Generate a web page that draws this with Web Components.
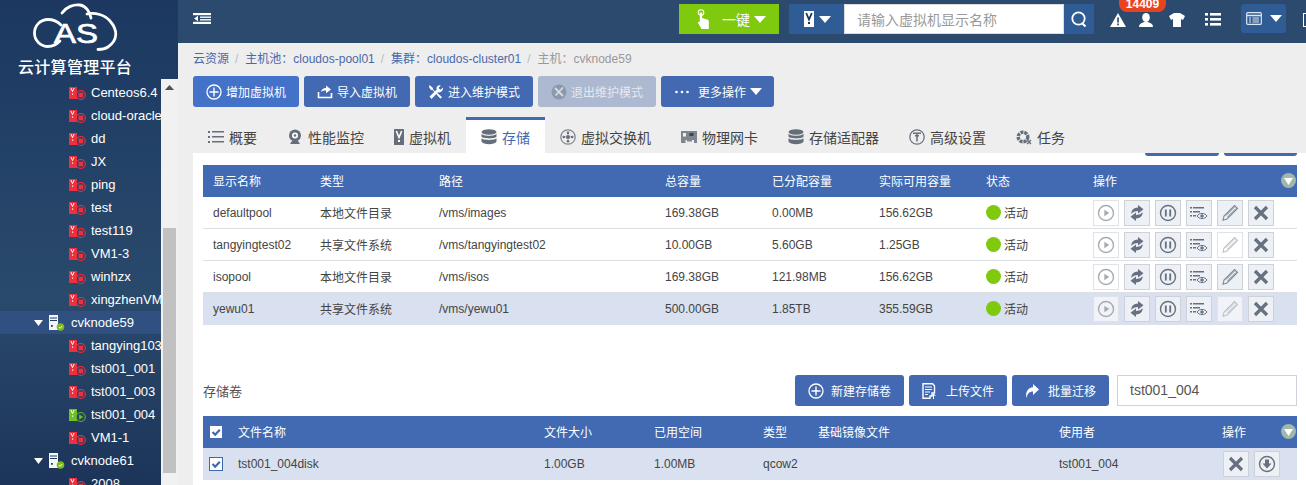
<!DOCTYPE html>
<html lang="zh"><head><meta charset="utf-8"><title>CAS</title>
<style>
html,body{margin:0;padding:0;height:485px;overflow:hidden;background:#fff;font-family:"Liberation Sans","Noto Sans CJK SC",sans-serif;font-size:12px}
</style></head><body>
<cas-app></cas-app>
<script>
const S=(w,h,b,vb)=>`<svg xmlns="http://www.w3.org/2000/svg" width="${w}" height="${h}" viewBox="${vb||`0 0 ${w} ${h}`}" style="display:block;flex:none">${b}</svg>`;
const ICONS={
 plus:S(16,16,'<circle cx="8" cy="8" r="7" fill="none" stroke="#fff" stroke-width="1.3"/><path d="M8 3.5v9M3.5 8h9" stroke="#fff" stroke-width="1.4"/>'),
 imp:S(16,16,'<path d="M1.5 8v5.5h13V9" fill="none" stroke="#fff" stroke-width="1.6"/><path d="M4 8c.5-2.6 2.6-4 5-4V1.6l5 3.9-5 3.700V6.600C7 6.500 5.500 7 4 8z" fill="#fff"/>'),
 tools:S(16,16,'<path d="M1.500 1l3.500 3v1.500L14 13l-1.500 1.800L4.500 6H3L1 3z" fill="#fff"/><path d="M15 3.500l-2.500 2.200-2-1.800 2.300-2.400c-2.200-.6-4.300.8-4.300 3 0 .5.100.8.200 1.200L1.500 12.500 3.500 15 10 8.300c2.600.9 5.400-1.900 5-4.800z" fill="#fff"/>'),
 toolsOff:S(16,16,'<circle cx="8" cy="8" r="7.500" fill="#8c99ad"/><path d="M4 4l8 8M12 3.500L4.500 11.500" stroke="#d6dbe5" stroke-width="1.800"/>'),
 dots:S(20,16,'<circle cx="2.500" cy="8" r="1.300" fill="#fff"/><circle cx="8" cy="8" r="1.300" fill="#fff"/><circle cx="13.500" cy="8" r="1.300" fill="#fff"/>'),
 tri:S(12,7,'<path d="M0 0h12L6 7z" fill="#fff"/>'),
 list:S(16,16,'<g fill="#656e7b"><rect x="0" y="2" width="2" height="2"/><rect x="0" y="7" width="2" height="2"/><rect x="0" y="12" width="2" height="2"/><rect x="4" y="2" width="12" height="1.500"/><rect x="4" y="7" width="12" height="1.500"/><rect x="4" y="12" width="12" height="1.500"/></g>'),
 cam:S(16,16,'<circle cx="8" cy="6.500" r="6" fill="#656e7b"/><circle cx="8" cy="6.500" r="3" fill="#fff"/><circle cx="8" cy="6.500" r="1.300" fill="#656e7b"/><path d="M3 15h10l-2-3H5z" fill="#656e7b"/>'),
 vmg:S(10,16,'<rect width="10" height="16" rx=".5" fill="#656e7b"/><path d="M2.300 2l2.700 6.500L7.700 2" fill="none" stroke="#fff" stroke-width="1.600"/><rect x="4" y="11" width="2" height="2" fill="#fff"/>'),
 db:S(16,16,'<g fill="#656e7b"><ellipse cx="8" cy="3" rx="7.500" ry="2.800"/><path d="M.5 4.500C1.500 7.500 14.500 7.500 15.500 4.500V7.500C14.500 10 1.500 10 .5 7.500z"/><path d="M.5 9C1.500 11.500 14.500 11.500 15.500 9V12.500C14 16 2 16 .5 12.500z"/></g>'),
 sw:S(16,16,'<g fill="none" stroke="#7b838f"><circle cx="8" cy="8" r="7.200" stroke-width="1.200"/><path d="M8 3v10M3 8h10" stroke-width=".7"/></g><g fill="#656e7b"><circle cx="8" cy="8" r="2"/><circle cx="8" cy="3.800" r="1.300"/><circle cx="8" cy="12.200" r="1.300"/><circle cx="3.800" cy="8" r="1.300"/><circle cx="12.200" cy="8" r="1.300"/></g>'),
 nic:S(16,16,'<path d="M0 2h16v12h-3v-3h-2v1.500H6V11H4.500v3H0z" fill="#80868f"/><rect x="2" y="4" width="3" height="3.500" fill="#eee"/><rect x="8.500" y="4" width="4" height="3" fill="#3f444c"/>'),
 adv:S(16,16,'<circle cx="8" cy="8" r="7.200" fill="none" stroke="#656e7b" stroke-width="1.200"/><path d="M4 4.300h8M6 6.800h4M8 4.300V12.500" stroke="#656e7b" stroke-width="1.500" fill="none"/>'),
 task:S(16,16,'<circle cx="7" cy="8" r="4.800" fill="none" stroke="#656e7b" stroke-width="3.400" stroke-dasharray="3 .9"/><path d="M11 11l4 4M15 11l-4 4" stroke="#656e7b" stroke-width="1.400"/>'),
 play:S(18,18,'<circle cx="9" cy="9" r="7.500" fill="none" stroke="#a5abb5" stroke-width="1.400"/><path d="M7.300 5.700l5 3.300-5 3.300z" fill="#a5abb5"/>'),
 sync:S(16,18,'<g fill="#667080"><path d="M2.500 10C2 6.500 4.500 3.500 9 3.500V1l5.500 4.300L9 9.500V7C6 7 4 7.800 2.500 10z"/><path d="M13.500 8c.5 3.500-2 6.500-6.500 6.500V17l-5.500-4.300L7 8.500V11c3 0 5-.8 6.500-3z"/></g>'),
 pause:S(18,18,'<circle cx="9" cy="9" r="7.500" fill="none" stroke="#667080" stroke-width="1.400"/><path d="M6.800 5.500v7M11.200 5.500v7" stroke="#667080" stroke-width="1.800"/>'),
 eye:S(18,16,'<g fill="#667080"><rect x="0" y="2" width="2" height="1.500"/><rect x="3" y="2" width="11" height="1.500"/><rect x="0" y="6" width="2" height="1.500"/><rect x="3" y="6" width="7" height="1.500"/><rect x="0" y="10" width="2" height="1.500"/><rect x="3" y="10" width="3" height="1.500"/></g><path d="M7 11c2.500-3.500 7.500-3.500 10 0-2.500 3.500-7.500 3.500-10 0z" fill="none" stroke="#667080"/><circle cx="12" cy="11" r="1.700" fill="#667080"/>'),
 pen:S(18,18,'<path d="M13.500 1.500l3 3L6 15l-4 1.200L3 12z" fill="none" stroke="#808793" stroke-width="1.100"/><path d="M5 11.500l8.500-8.500M6.500 13l8.500-8.500" stroke="#808793"/>'),
 penOff:S(18,18,'<path d="M13.500 1.500l3 3L6 15l-4 1.200L3 12z" fill="none" stroke="#bdc2ca" stroke-width="1.100"/><path d="M5 11.500l8.500-8.500M6.500 13l8.500-8.500" stroke="#bdc2ca"/>'),
 x:S(16,16,'<path d="M2 2l12 12M14 2L2 14" stroke="#667080" stroke-width="3.200"/>'),
 down:S(18,18,'<circle cx="9" cy="9" r="7.500" fill="none" stroke="#667080" stroke-width="1.400"/><path d="M7 4.500h4v4h2.500L9 13.500 4.500 8.500H7z" fill="#667080"/>'),
 doc:S(14,16,'<path d="M1 .8h9.500l2 2V10H10v3H8v2.200H1z" fill="none" stroke="#fff" stroke-width="1.400"/><path d="M3 4h7M3 6.500h7M3 9h5M3 11.500h3" stroke="#fff" stroke-width="1.200"/><path d="M11.500 11v5M9.500 13l2-2 2 2" stroke="#fff" fill="none"/>'),
 share:S(14,16,'<path d="M8 1l6 5.500L8 12V8.500C4.500 8.500 2.500 10.500 1.500 15 .2 9 3 4.500 8 4.200z" fill="#fff"/>'),
 collapse:S(18,11,'<rect x="0" y="0" width="18" height="2.200" fill="#fff"/><rect x="0" y="8.800" width="18" height="2.200" fill="#fff"/><rect x="7" y="3.500" width="11" height="1.400" fill="#fff"/><rect x="7" y="6.100" width="11" height="1.400" fill="#fff"/><path d="M5 2.800v5.400L1 5.500z" fill="#fff"/>'),
 hand:S(12,20,'<circle cx="4" cy="3.500" r="2.800" fill="none" stroke="#fff" stroke-width="1.100"/><path d="M2.800 3.500h2.300v5.500l5 1.500c1.200.4 1.700 1 1.700 2V20H4.500L.8 13.200l1 -.8 1 1z" fill="#fff"/>'),
 vw:S(10,16,'<rect width="10" height="16" fill="#fff"/><path d="M2.200 2l2.800 6.500L7.800 2" fill="none" stroke="#16365f" stroke-width="1.800"/><rect x="4" y="11" width="2" height="2" fill="#16365f"/>'),
 search:S(16,17,'<circle cx="7.500" cy="7.500" r="6.200" fill="none" stroke="#fff" stroke-width="1.800"/><path d="M11.500 12.500l3 3" stroke="#fff" stroke-width="2.200"/>'),
 alert:S(16,14,'<path d="M8 0l8 14H0z" fill="#fff"/><rect x="7.200" y="4.500" width="1.700" height="5" fill="#2c4a6d"/><rect x="7.200" y="10.500" width="1.700" height="1.800" fill="#2c4a6d"/>'),
 user:S(14,14,'<ellipse cx="7" cy="4.500" rx="3.800" ry="4.500" fill="#fff"/><path d="M0 14c0-3 2.500-4 5-5h4c2.500 1 5 2 5 5z" fill="#fff"/>'),
 shirt:S(16,14,'<path d="M5 0h6l5 3-2 4-2-1v8H4V6L2 7 0 3z" fill="#fff"/>'),
 ul:S(16,13,'<g fill="#fff"><rect y="0" width="3" height="2.600"/><rect y="5" width="3" height="2.600"/><rect y="10" width="3" height="2.600"/><rect x="5" y="0" width="11" height="2.600"/><rect x="5" y="5" width="11" height="2.600"/><rect x="5" y="10" width="11" height="2.600"/></g>'),
 panel:S(16,13,'<rect x=".7" y=".7" width="14.600" height="11.600" rx="1" fill="none" stroke="#dfe6f0" stroke-width="1.200"/><path d="M1 3.500h14" stroke="#dfe6f0" stroke-width="1.500"/><path d="M3 6h2M3 8h2M3 10h2M6.500 6H13M6.500 8H13M6.500 10H13" stroke="#dfe6f0"/>'),
 vmStop:S(17,16,'<rect x="0" y="2" width="8" height="12" fill="#ee2f3d"/><path d="M1.900 3l1.600 3.600L5.100 3" fill="none" stroke="#fff" stroke-width="1"/><rect x="3" y="8.500" width="1.200" height="1.200" fill="#fff"/><circle cx="11.800" cy="10" r="4.500" fill="#2a4468" stroke="#ee2f3d" stroke-width="1.100"/><rect x="9.500" y="7.700" width="4.600" height="4.600" fill="#ee2f3d"/>'),
 vmRun:S(17,16,'<rect x="0" y="2" width="8" height="12" fill="#6fc11f"/><path d="M1.900 3l1.600 3.600L5.100 3" fill="none" stroke="#fff" stroke-width="1"/><rect x="3" y="8.500" width="1.200" height="1.200" fill="#fff"/><circle cx="11.800" cy="10" r="4.500" fill="#2a4468" stroke="#5bb02a" stroke-width="1.100"/><path d="M10.200 7.600l3.900 2.400-3.900 2.400z" fill="#6fc11f"/>'),
 node:S(16,16,'<rect x="0" y="0" width="9" height="15" fill="#f3f5f8"/><path d="M1 3h7M1 5.500h7" stroke="#1f3e63"/><rect x="2" y="10" width="1.800" height="1.800" fill="#1f3e63"/><circle cx="11.500" cy="12" r="3.800" fill="#7bbb1c"/><path d="M9.800 12l1.300 1.300 2.200-2.400" fill="none" stroke="#fff"/>'),
 expand:S(9,6,'<path d="M0 0h9L4.500 6z" fill="#fff"/>'),
 sort:S(15,15,'<circle cx="7.500" cy="7.500" r="7.500" fill="#9fb8ae"/><path d="M3 5h9l-4.500 7z" fill="#fff"/>'),
 chk:S(12,12,'<rect width="12" height="12" fill="#fff"/><path d="M2.500 6l2.700 2.700L9.800 3.800" fill="none" stroke="#3f69ae" stroke-width="2.200"/>'),
 up:S(9,5,'<path d="M0 5L4.500 0 9 5z" fill="#505050"/>')
};
function def(name,tpl,extra){
  const t=document.createElement('template');t.innerHTML=tpl;
  customElements.define(name,class extends HTMLElement{
    constructor(){super();this.attachShadow({mode:'open'}).appendChild(t.content.cloneNode(true));}
    connectedCallback(){if(extra)extra(this,this.shadowRoot);}
  });
}
const attr=(e,n,d='')=>e.getAttribute(n)??d;

def('cas-icon','<style>:host{display:inline-flex;flex:none;align-items:center;justify-content:center}</style><span id="i" style="display:contents"></span>',
 (e,r)=>{const n=attr(e,'name');if(n)r.getElementById('i').innerHTML=ICONS[n]||'';});

def('cas-logo',`<style>:host{display:block;height:79px;box-sizing:border-box;flex:none}
 svg{display:block}
 .t{margin:0 0 0 18px;color:#fff;font-size:16px;line-height:18px;letter-spacing:.3px;font-family:"Noto Sans CJK SC","Liberation Sans",sans-serif;font-weight:500;white-space:nowrap}</style>
 <svg width="178" height="57" viewBox="0 0 178 57">
 <path d="M61 25C57 21 53 19.500 48 19.500 40 19.500 34.500 26 34.500 33 34.500 41 41 46.500 48 46.500 53 46.500 57 44 60 41M62 13C66 7 74 4 80 5 86 6 90 12 91 18M87 14C95 12 105 15 110 21 118 30 118 40 108 47 105 49 101 49.500 98 49.500" fill="none" stroke="#fff" stroke-width="2.800" stroke-linecap="round"/>
 <text x="54" y="43" fill="#fff" font-family="Liberation Sans" font-size="28" textLength="44" lengthAdjust="spacingAndGlyphs" stroke="#fff" stroke-width=".7">AS</text>
 </svg><div class="t">云计算管理平台</div>`);

def('cas-tree-row',`<style>:host{display:flex;align-items:center;height:23px;color:#fff;font-size:13px;white-space:nowrap;overflow:hidden;flex:none}
 :host([node]){padding-left:34px}:host(:not([node])){padding-left:69px}
 :host([sel]){background:#2f5080}
 #h{display:flex;align-items:center;margin-right:5px}
 .ex{margin-right:6px}.nd{margin-right:1px}</style>
 <div id="h"></div><slot></slot>`,(e,r)=>{
  const h=r.getElementById('h');
  if(e.hasAttribute('node')) h.innerHTML='<cas-icon class="ex" name="expand"></cas-icon><cas-icon class="nd" name="node"></cas-icon>';
  else h.innerHTML=`<cas-icon name="${e.hasAttribute('run')?'vmRun':'vmStop'}"></cas-icon>`;
 });

def('cas-scroll',`<style>:host{display:flex;flex-direction:column;width:17px;background:#f1f1f1;flex:none;align-items:center;box-sizing:border-box}
 .a{height:17px;display:flex;align-items:center;justify-content:center;margin-bottom:132px;flex:none}
 .th{width:13px;height:245px;background:#c1c1c1;flex:none}</style>
 <div class="a"><cas-icon name="up"></cas-icon></div><div class="th"></div>`);

def('cas-side',`<style>:host{display:flex;flex-direction:column;width:178px;height:485px;flex:none;overflow:hidden;
 background:linear-gradient(180deg,#1c3860 0,#1f3d64 79px,#2a4a6c 300px,#1c3459 485px)}
 .b{display:flex;flex:1;min-height:0}.tree{flex:1;min-width:0;padding-top:2px;overflow:hidden;display:flex;flex-direction:column}</style>
 <cas-logo></cas-logo><div class="b"><div class="tree"><slot></slot></div><cas-scroll></cas-scroll></div>`);

def('cas-topbar',`<style>:host{display:flex;align-items:flex-start;height:43px;background:#2c4a6d;flex:none;padding:4px 0 0 15px;box-sizing:border-box;color:#fff;position:relative}
 .col{margin-top:9px}.sp{flex:1}
 .g{width:100px;height:30px;background:#7fc90e;display:flex;align-items:center;padding-left:18px;box-sizing:border-box;font-size:14px;font-family:"Noto Sans CJK SC",sans-serif}
 .g .tx{margin:0 4px 0 13px}
 .v{width:55px;height:30px;margin-left:10px;background:#2f5c94;display:flex;align-items:center;padding-left:15px;box-sizing:border-box;gap:5px}
 .in{width:220px;height:30px;box-sizing:border-box;background:#fff;border:1px solid #dcdcdc;color:#999;font-size:14px;line-height:28px;padding-left:12px;white-space:nowrap;font-family:"Noto Sans CJK SC",sans-serif}
 .s{width:30px;height:30px;background:#2f5c94;display:flex;align-items:center;justify-content:center}
 .ic{margin-top:9px}
 .tb{width:45px;height:29px;border-radius:3px;background:#2f5c94;display:flex;align-items:center;padding-left:5px;box-sizing:border-box;margin-left:20px;gap:8px}
 .badge{position:absolute;left:941px;top:0;width:47px;height:12px;background:#e8431e;border-radius:0 0 8px 8px;color:#fff;font-size:12px;font-weight:700;line-height:9px;text-align:center}
 .edge{width:3px;height:14px;border:1.500px solid #fff;border-right:0;margin:9px 0 0 17px;box-sizing:border-box}
 </style>
 <cas-icon class="col" name="collapse"></cas-icon><div class="sp"></div>
 <div class="g"><cas-icon name="hand"></cas-icon><span class="tx">一键</span><cas-icon name="tri"></cas-icon></div>
 <div class="v"><cas-icon name="vw"></cas-icon><cas-icon name="tri"></cas-icon></div>
 <div class="in">请输入虚拟机显示名称</div>
 <div class="s"><cas-icon name="search"></cas-icon></div>
 <cas-icon class="ic" style="margin-left:16px" name="alert"></cas-icon>
 <cas-icon class="ic" style="margin-left:13px" name="user"></cas-icon>
 <cas-icon class="ic" style="margin-left:16px" name="shirt"></cas-icon>
 <cas-icon class="ic" style="margin-left:20px" name="ul"></cas-icon>
 <div class="tb"><cas-icon name="panel"></cas-icon><cas-icon name="tri"></cas-icon></div>
 <div class="edge"></div>
 <div class="badge">14409</div>`);

def('cas-crumbs',`<style>:host{display:flex;height:33px;align-items:center;padding-left:15px;font-size:12px;color:#4a68a8;white-space:nowrap;flex:none;box-sizing:border-box;line-height:17px;font-family:"Liberation Sans","Noto Sans CJK SC",sans-serif}
 i{font-style:normal;color:#bbb;padding:0 7px 0 6px}span{color:#999}</style>
 云资源<i>/</i>主机池：cloudos-pool01<i>/</i>集群：cloudos-cluster01<i>/</i><span>主机：cvknode59</span>`);

def('cas-btn',`<style>:host{display:inline-flex;align-items:center;height:31px;padding:0 13px;box-sizing:border-box;background:var(--b,#4269b2);color:#fff;border-radius:3px;font-size:12px;white-space:nowrap;flex:none;gap:var(--g,4px)}
 :host([primary]){background:#4472c8}:host([off]){background:#acb9d0;color:#e4e8f0}:host([caret]){padding-right:12px}</style>
 <cas-icon id="i"></cas-icon><slot></slot><cas-icon id="t"></cas-icon>`,(e,r)=>{
  r.getElementById('i').setAttribute('name',attr(e,'icon'));r.getElementById('i').shadowRoot.getElementById('i').innerHTML=ICONS[attr(e,'icon')]||'';
  const t=r.getElementById('t');if(e.hasAttribute('caret')){t.shadowRoot.getElementById('i').innerHTML=ICONS.tri;}else t.remove();
 });

def('cas-tab',`<style>:host{display:flex;align-items:center;height:36px;padding:3px 15px 0;box-sizing:border-box;font-size:14px;color:#444;gap:5px;flex:none;white-space:nowrap;border-top:0 solid #4269b2;margin-top:0}
 :host([on]){background:#fff;color:#4269b2;border-top-width:3px;padding-top:0}
 </style><cas-icon id="i"></cas-icon><slot></slot>`,(e,r)=>{r.getElementById('i').shadowRoot.getElementById('i').innerHTML=ICONS[attr(e,'icon')]||'';});

def('cas-ops',`<style>:host{display:flex;gap:5px;align-items:center}
 b{width:26px;height:26px;box-sizing:border-box;border:1px solid #cdd2d8;background:#edf0f4;display:flex;align-items:center;justify-content:center}
 b.l{background:#fff;border-color:#dfe2e6}:host([sel]) b.l{background:#f1f3f8}</style><slot></slot>`,(e,r)=>{
  attr(e,'list').split(' ').forEach(n=>{const light=n[0]=='~';n=n.replace('~','');
   const b=document.createElement('b');if(light)b.className='l';b.innerHTML=ICONS[n];r.appendChild(b);});
 });

def('cas-row',`<style>:host{display:grid;grid-template-columns:var(--cols);height:var(--h,32px);align-items:center;font-size:12px;color:#444;box-sizing:border-box;border-bottom:1px solid #dcdfe4;white-space:nowrap;position:relative}
 :host([head]){background:#416ab2;color:#fff;border:0;font-family:"Noto Sans CJK SC",sans-serif;padding-bottom:1px}
 :host([sel]){background:#d9e0ef;border-color:#d9e0ef}</style><slot></slot>`);

def('cas-stat',`<style>:host{display:flex;align-items:center;gap:3px}i{width:15px;height:15px;border-radius:50%;background:#7fc90e;display:block}</style><i></i><slot></slot>`);

def('cas-sort',`<style>:host{display:flex;justify-content:flex-end;padding-right:1px}</style><cas-icon name="sort"></cas-icon>`);

def('cas-check',`<style>:host{display:flex;width:14px;height:14px;box-sizing:border-box;align-items:center;justify-content:center;background:#fff}
 :host([b]){border:1px solid #3f69ae}</style><cas-icon name="chk"></cas-icon>`);

def('cas-main',`<style>:host{display:flex;flex-direction:column;flex:1;min-width:0;height:485px;background:#eee;overflow:hidden}
 .bar{display:flex;gap:5px;padding:0 0 0 15px;flex:none}
 .tabs{display:flex;padding:10px 0 0 15px;flex:none}
 .panel{flex:1;background:#fff;margin-left:15px;padding:0 9px 0 10px;min-height:0;display:flex;flex-direction:column;overflow:hidden}
 .clip{display:flex;justify-content:flex-end;gap:5px;height:3px;margin-bottom:9px;flex:none}
 .clip i{display:block;background:#4269b2;border-radius:0 0 3px 3px}
 .t1{--cols:107px 119px 226px 107px 107px 107px 107px 1fr}
 .t2{--cols:35px 306px 110px 109px 55px 241px 163px 59px 1fr}
 .vt{display:flex;align-items:center;margin-top:50px;gap:5px;--g:7px}
 .ti{flex:1;font-size:13px;color:#555;font-family:"Noto Sans CJK SC",sans-serif}
 .in{width:180px;height:31px;margin-left:3px;border:1px solid #cfd1e0;box-sizing:border-box;padding-left:12px;line-height:28px;font-size:14px;color:#555}
 .t2h{margin-top:10px}
 </style>
 <cas-topbar></cas-topbar>
 <cas-crumbs></cas-crumbs>
 <div class="bar">
  <cas-btn primary icon="plus">增加虚拟机</cas-btn><cas-btn icon="imp">导入虚拟机</cas-btn><cas-btn icon="tools">进入维护模式</cas-btn><cas-btn off icon="toolsOff">退出维护模式</cas-btn><cas-btn icon="dots" caret>更多操作</cas-btn>
 </div>
 <div class="tabs">
  <cas-tab icon="list">概要</cas-tab><cas-tab icon="cam">性能监控</cas-tab><cas-tab icon="vmg">虚拟机</cas-tab><cas-tab on icon="db">存储</cas-tab><cas-tab icon="sw">虚拟交换机</cas-tab><cas-tab icon="nic">物理网卡</cas-tab><cas-tab icon="db">存储适配器</cas-tab><cas-tab icon="adv">高级设置</cas-tab><cas-tab icon="task">任务</cas-tab>
 </div>
 <div class="panel">
  <div class="clip"><i style="width:74px"></i><i style="width:73px"></i></div>
  <div class="t1" id="t1"></div>
  <div class="vt"><div class="ti">存储卷</div>
   <cas-btn icon="plus">新建存储卷</cas-btn><cas-btn icon="doc" style="--g:10px">上传文件</cas-btn><cas-btn icon="share" style="--g:9px">批量迁移</cas-btn>
   <div class="in">tst001_004</div></div>
  <div class="t2 t2h" id="t2"></div>
 </div>`,(e,r)=>{
  if(r.getElementById('t1').childElementCount) return;
  const cell=(t,l=10)=>`<span style="padding-left:${l}px">${t}</span>`;
  const rows=[['defaultpool','本地文件目录','/vms/images','169.38GB','0.00MB','156.62GB',0,0],
   ['tangyingtest02','共享文件系统','/vms/tangyingtest02','10.00GB','5.60GB','1.25GB',1,0],
   ['isopool','本地文件目录','/vms/isos','169.38GB','121.98MB','156.62GB',0,0],
   ['yewu01','共享文件系统','/vms/yewu01','500.00GB','1.85TB','355.59GB',1,1]];
  let h=`<cas-row head>${['显示名称','类型','路径','总容量','已分配容量','实际可用容量','状态','操作'].map(x=>cell(x)).join('')}</cas-row>`;
  h=h.replace('</cas-row>','<cas-sort style="position:absolute;right:0;top:8px"></cas-sort></cas-row>');
  for(const v of rows){
   const pen=v[6]?'~penOff':'pen';
   h+=`<cas-row ${v[7]?'sel':''}>${v.slice(0,6).map((x,i)=>cell(x)).join('')}<span style="padding-left:10px"><cas-stat>活动</cas-stat></span><span style="padding-left:10px"><cas-ops ${v[7]?'sel':''} list="~play sync pause eye ${pen} x"></cas-ops></span></cas-row>`;
  }
  r.getElementById('t1').innerHTML=h;
  r.getElementById('t2').innerHTML=`<cas-row head><span style="padding-left:6px"><cas-check style="background:none"></cas-check></span>${['文件名称','文件大小','已用空间','类型','基础镜像文件','使用者','操作'].map(x=>cell(x,0)).join('')}<cas-sort></cas-sort></cas-row>
  <cas-row sel><span style="padding-left:6px"><cas-check b></cas-check></span>${['tst001_004disk','1.00GB','1.00MB','qcow2','','tst001_004'].map(x=>cell(x,0)).join('')}<cas-ops style="grid-column:8 / span 2;margin-left:1px" list="x down"></cas-ops></cas-row>`;
 });

def('cas-app',`<style>:host{display:flex;width:1306px;height:485px;overflow:hidden}</style>
 <cas-side>
 <cas-tree-row>Centeos6.4</cas-tree-row><cas-tree-row>cloud-oracle</cas-tree-row><cas-tree-row>dd</cas-tree-row><cas-tree-row>JX</cas-tree-row><cas-tree-row>ping</cas-tree-row><cas-tree-row>test</cas-tree-row><cas-tree-row>test119</cas-tree-row><cas-tree-row>VM1-3</cas-tree-row><cas-tree-row>winhzx</cas-tree-row><cas-tree-row>xingzhenVM</cas-tree-row>
 <cas-tree-row node sel>cvknode59</cas-tree-row>
 <cas-tree-row>tangying103</cas-tree-row><cas-tree-row>tst001_001</cas-tree-row><cas-tree-row>tst001_003</cas-tree-row><cas-tree-row run>tst001_004</cas-tree-row><cas-tree-row>VM1-1</cas-tree-row>
 <cas-tree-row node>cvknode61</cas-tree-row><cas-tree-row>2008</cas-tree-row>
 </cas-side><cas-main></cas-main>`);
</script>
</body></html>
